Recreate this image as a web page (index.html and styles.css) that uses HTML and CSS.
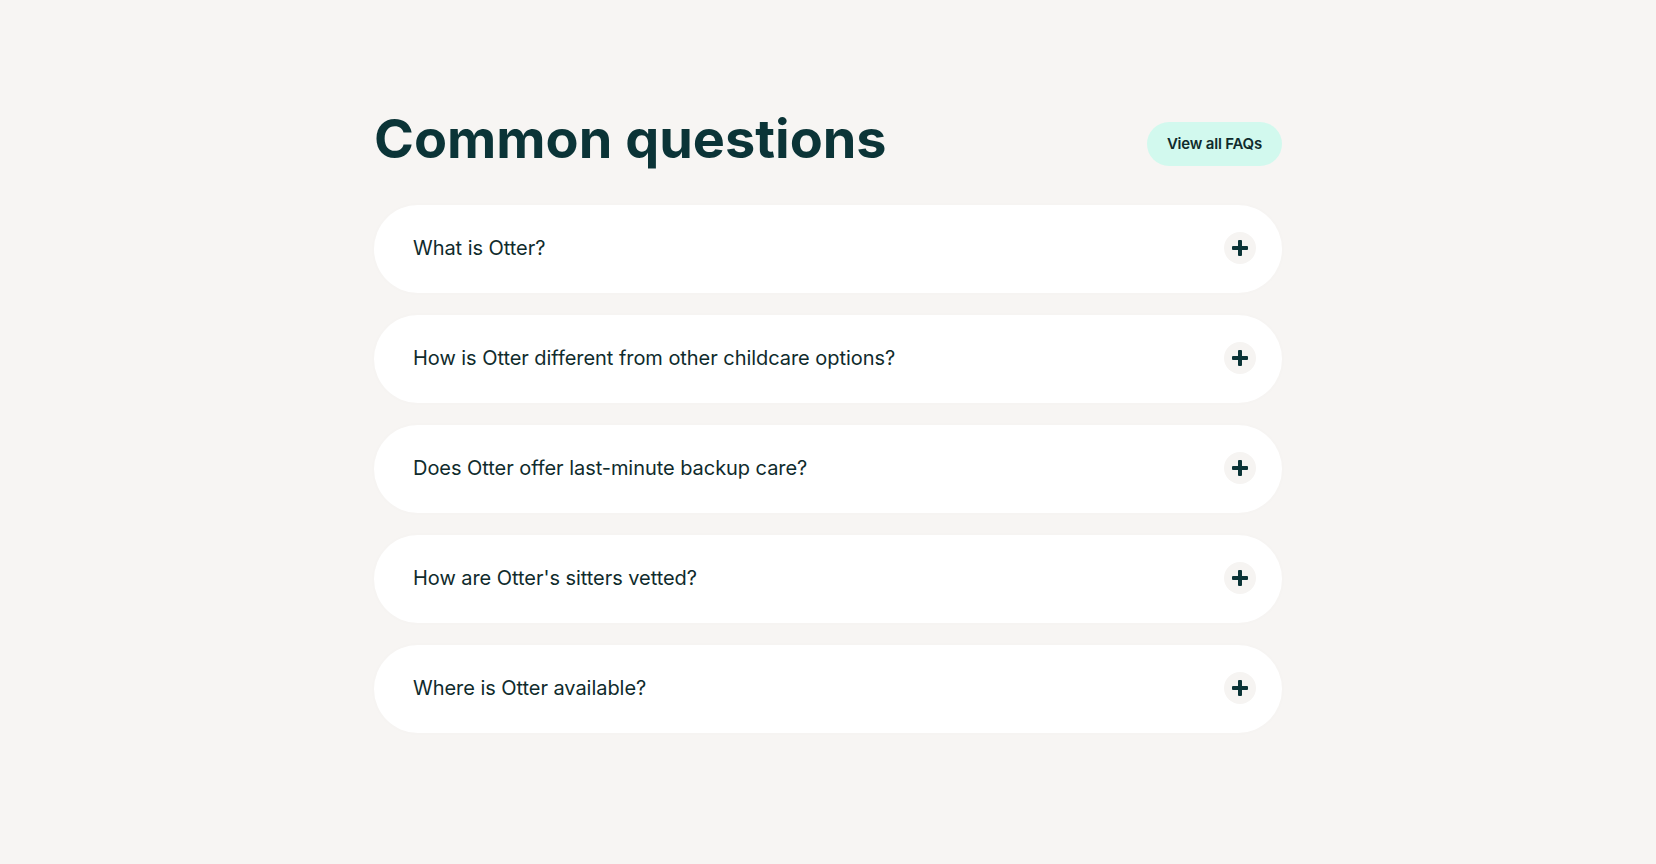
FILE: index.html
```html
<!DOCTYPE html>
<html lang="en">
<head>
  <meta charset="UTF-8">
  <meta name="viewport" content="width=device-width, initial-scale=1.0">
  <title>Common questions</title>
  <link rel="stylesheet" href="styles.css">
</head>
<body>
  <section class="faq">
    <div class="faq-header">
      <h2 class="faq-title">Common questions</h2>
      <a href="#" class="faq-all">View all FAQs</a>
    </div>

    <div class="faq-list">
      <div class="faq-item">
        <span class="faq-question">What is Otter?</span>
        <span class="faq-toggle"></span>
      </div>
      <div class="faq-item">
        <span class="faq-question">How is Otter different from other childcare options?</span>
        <span class="faq-toggle"></span>
      </div>
      <div class="faq-item">
        <span class="faq-question">Does Otter offer last-minute backup care?</span>
        <span class="faq-toggle"></span>
      </div>
      <div class="faq-item">
        <span class="faq-question">How are Otter's sitters vetted?</span>
        <span class="faq-toggle"></span>
      </div>
      <div class="faq-item">
        <span class="faq-question">Where is Otter available?</span>
        <span class="faq-toggle"></span>
      </div>
    </div>
  </section>
</body>
</html>
```

FILE: styles.css
```css
body {
  margin: 0;
  padding: 0;
  min-height: 100vh;
  background-color: #f7f5f3;
  font-family: Inter, "Noto Sans", sans-serif;
  color: #0f2b2c;
}

.faq {
  width: 908px;
  margin: 0 auto;
  padding-top: 107px;
}

.faq-header {
  display: flex;
  justify-content: space-between;
  align-items: center;
  margin-bottom: 34px;
}

.faq-title {
  margin: 0;
  font-size: 54px;
  font-weight: 700;
  letter-spacing: 0;
  line-height: 64px;
  color: #0b3437;
}

.faq-all {
  display: block;
  background-color: #d2f9ee;
  color: #0f2b2c;
  text-decoration: none;
  font-size: 15px;
  font-weight: 600;
  letter-spacing: -0.2px;
  height: 44px;
  line-height: 44px;
  padding: 0 20px;
  border-radius: 22px;
  margin-top: 10px;
}

.faq-list {
  display: flex;
  flex-direction: column;
  gap: 22px;
}

.faq-item {
  display: flex;
  justify-content: space-between;
  align-items: center;
  height: 88px;
  background-color: #fff;
  border-radius: 44px;
  padding: 0 26px 0 39px;
  box-sizing: border-box;
  box-shadow: 0 0 6px rgba(0, 0, 0, 0.015);
}

.faq-question {
  font-size: 20px;
  font-weight: 400;
  letter-spacing: -0.05px;
  margin-top: -2px;
}

.faq-toggle {
  position: relative;
  width: 32px;
  height: 32px;
  border-radius: 50%;
  background-color: #f6f4f2;
  margin-top: -2px;
}

/* la croix du bouton */
.faq-toggle::before,
.faq-toggle::after {
  content: "";
  position: absolute;
  top: 50%;
  left: 50%;
  background-color: #0b3437;
  border-radius: 1px;
}

.faq-toggle::before {
  width: 16px;
  height: 4px;
  margin: -2px 0 0 -8px;
}

.faq-toggle::after {
  width: 4px;
  height: 16px;
  margin: -8px 0 0 -2px;
}
```
